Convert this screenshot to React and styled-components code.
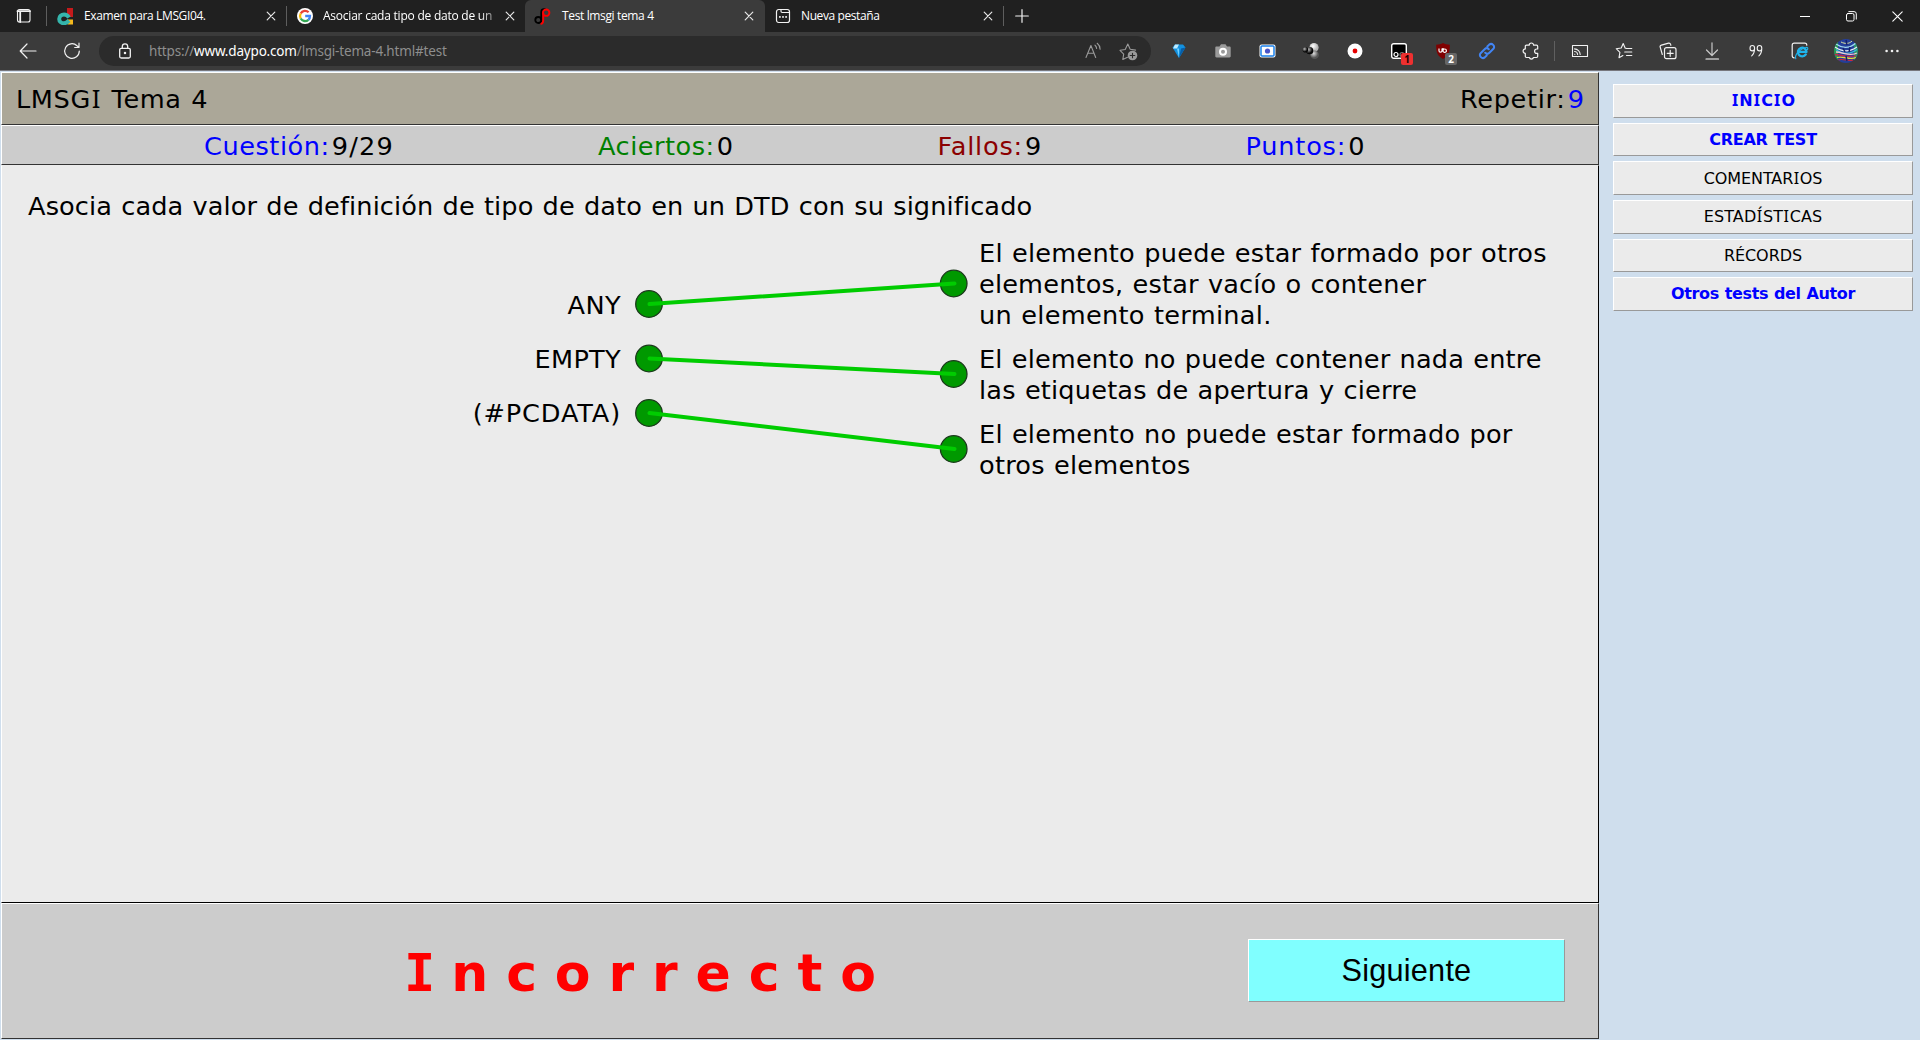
import React from "react";
import styled, { createGlobalStyle } from "styled-components";

const GlobalStyle = createGlobalStyle`
  * { box-sizing: border-box; }
  html, body { margin: 0; height: 1040px; overflow: hidden; }
  body { background: #cfdeed; color: #000; }
  svg { display: block; flex: none; }
`;

const VERDANA = `"DejaVu Sans", Verdana, sans-serif`;
const SEGOE = `"Open Sans", "Noto Sans", sans-serif`;

/* ---------- shared text ---------- */

const Text = styled.span`
  color: ${(p) => p.$color || "inherit"};
  letter-spacing: ${(p) => p.$track || 0}px;
  word-spacing: 0.034em;
  white-space: pre;
`;

const Serifed = styled.span`
  font-family: "Noto Sans", sans-serif;
  line-height: 1;
  margin: 0 ${(p) => p.$gap}em;
`;

/* Capital I carries slab serifs, the other letters do not. */
const slab = (text, gap = 0.035) =>
  text.split(/([IÍ])/).map((part, i) =>
    part === "I" || part === "Í" ? <Serifed key={i} $gap={gap}>{part}</Serifed> : part
  );

/* ---------- browser window ---------- */

const Window = styled.div`
  width: 1920px;
  height: 1040px;
  display: flex;
  flex-direction: column;
`;

const TabStrip = styled.div`
  height: 32px;
  display: flex;
  background: #202020;
  font: 12px/32px ${SEGOE};
  color: #fff;
`;

const TabActions = styled.div`
  width: 48px;
  padding: 0 0 0 16px;
  display: flex;
  align-items: center;
`;

const Divider = styled.span`
  width: 1px;
  height: 20px;
  margin: ${(p) => p.$margin || "0"};
  background: ${(p) => p.$color || "#5e5e5e"};
  align-self: center;
`;

const Tab = styled.div`
  width: ${(p) => p.$width}px;
  height: 32px;
  padding: 0 ${(p) => p.$end || 10}px 0 ${(p) => p.$pad}px;
  display: flex;
  align-items: center;
  border-radius: 6px 6px 0 0;
  background: ${(p) => (p.$active ? "#3b3b3b" : "transparent")};
`;

const TabTitle = styled.span`
  flex: 1;
  min-width: 0;
  margin-left: ${(p) => p.$gap}px;
  letter-spacing: ${(p) => p.$track}px;
  white-space: nowrap;
  ${(p) => p.$faded && "mask-image: linear-gradient(90deg, #000 86%, rgba(0, 0, 0, 0.35) 95%);"}
`;

const WindowControls = styled.div`
  margin-left: auto;
  display: flex;
`;

const ControlSlot = styled.div`
  width: ${(p) => p.$width || 46}px;
  display: flex;
  align-items: center;
  justify-content: center;
`;

const Toolbar = styled.div`
  height: 39px;
  display: flex;
  align-items: center;
  background: #3b3b3b;
  border-bottom: 1px solid #77777d;
`;

const NavSlot = styled.div`
  width: 44px;
  height: 38px;
  display: flex;
  align-items: center;
  justify-content: center;
  &:first-child { margin-left: 6px; }
`;

const AddressBar = styled.div`
  width: 1052px;
  height: 30px;
  margin-left: 5px;
  padding: 0 13px 0 18px;
  display: flex;
  align-items: center;
  border-radius: 15px;
  background: #2b2b2b;
  font: 13.5px/30px "Noto Sans", sans-serif;
  letter-spacing: -0.18px;
  color: #8e8e8e;
`;

const Url = styled.span`
  flex: 1;
  margin-left: 16px;
`;

const Host = styled.span`
  color: #fff;
`;

const AddressIcons = styled.div`
  display: flex;
  gap: 17px;
`;

const Extensions = styled.div`
  display: flex;
  align-items: center;
  margin-left: 6px;
`;

const ToolSlot = styled.div`
  position: relative;
  width: 44px;
  height: 38px;
  margin-left: ${(p) => p.$shift || 0}px;
  display: flex;
  align-items: center;
  justify-content: center;
`;

const Badge = styled.span`
  position: absolute;
  left: 24px;
  top: 21px;
  width: 12px;
  height: 12px;
  border-radius: 2px;
  background: ${(p) => p.$bg};
  color: ${(p) => p.$color};
  font: bold 10px/12px ${SEGOE};
  text-align: center;
`;

/* ---------- page ---------- */

const Page = styled.div`
  flex: 1;
  display: flex;
  padding: 1px 7px 0 1px;
  font: 25.6px/31px ${VERDANA};
`;

const Quiz = styled.main`
  width: 1598px;
  height: 967px;
  display: flex;
  flex-direction: column;
`;

const Panel = styled.section`
  border: 1px solid #333;
  border-top-color: #fff;
  border-left-color: #fff;
  background: #ccc;
`;

const TitleBar = styled(Panel)`
  height: 53px;
  padding: 2px 14px 0 14px;
  display: flex;
  align-items: center;
  justify-content: space-between;
  background: #aba798;
`;

const Pair = styled.div`
  display: flex;
  gap: 2px;
`;

const ScoreBar = styled(Panel)`
  height: 40px;
  padding: 3px 0 0 202px;
  display: grid;
  grid-template-columns: 394px 339.5px 308px 1fr;
  align-items: center;
`;

const Question = styled(Panel)`
  flex: 1;
  padding: 25px 26px 0 26px;
  border-color: #ebebeb #000 #000 #fff;
  background: #ebebeb;
  display: flex;
  flex-direction: column;
  gap: 17px;
`;

const Matching = styled.div`
  display: grid;
  grid-template-columns: 593px 358px 1fr;
  align-items: center;
`;

const Terms = styled.div`
  display: flex;
  flex-direction: column;
  align-items: flex-end;
  gap: 23px;
  margin: -1px 0 1px;
`;

const Meanings = styled.div`
  display: flex;
  flex-direction: column;
  gap: 13px;
  margin: -1px 0 1px;
`;

const Meaning = styled.div`
  display: flex;
  flex-direction: column;
`;

const Footer = styled(Panel)`
  height: 136px;
  padding: 0 33px 0 402px;
  display: flex;
  align-items: center;
  justify-content: space-between;
`;

const Verdict = styled.div`
  padding-top: 3px;
  font: bold 52px/62px ${VERDANA};
  letter-spacing: 17.9px;
  color: #f00;
`;

const VerdictInitial = styled.span`
  font-family: "DejaVu Sans Mono", monospace;
  margin-right: -2px;
`;

const NextButton = styled.button`
  width: 317px;
  height: 63px;
  margin-bottom: 1px;
  padding: 0;
  border: 1px solid #999;
  border-top-color: #fff;
  border-left-color: #fff;
  background: #80ffff;
  color: #000;
  font: 30.7px "Liberation Sans", Arial, sans-serif;
  letter-spacing: 0.2px;
`;

const Sidebar = styled.nav`
  width: 300px;
  margin-left: 14px;
  padding-top: 12.2px;
  display: flex;
  flex-direction: column;
  gap: 5px;
`;

const SideLink = styled.a`
  height: 33.6px;
  padding-top: 1px;
  display: flex;
  align-items: center;
  justify-content: center;
  border: 1px solid #999;
  border-top-color: #fff;
  border-left-color: #fff;
  background: #ebebeb;
  font-size: 16px;
  line-height: 20px;
  font-weight: ${(p) => (p.$strong ? "bold" : "normal")};
  color: ${(p) => (p.$strong ? "#00f" : "#000")};
`;

/* ---------- icons ---------- */

const Icon = ({ size = 18, color = "#f2f2f2", width = 1.1, box, children }) => (
  <svg width={size} height={size} viewBox={box || `0 0 ${size} ${size}`} fill="none"
    stroke={color} strokeWidth={width} strokeLinecap="round" strokeLinejoin="round">
    {children}
  </svg>
);

const TabsIcon = () => (
  <Icon size={16}>
    <rect x="1.5" y="1.5" width="12.5" height="12.5" rx="2" />
    <path d="M1.5 3.2h12.5M4.2 4v10" strokeWidth="1.8" />
  </Icon>
);
const CloseIcon = () => (
  <Icon size={10} width={1.2} color="#e8e8e8"><path d="M1.2 1.2l7.6 7.6M8.8 1.2L1.2 8.8" /></Icon>
);
const DaypoCampusIcon = () => (
  <svg width="17" height="17" viewBox="0 0 17 17">
    <path d="M10 0h6v9h-6z" fill="#c51a1b" />
    <path d="M10.500 11.500h5.500v5h-5.500z" fill="#f5b81c" />
    <path d="M12 9.500c-1.500-2.500-2.500-3-5-3s-4.800 2-4.800 4.500 2 4.300 4.800 4.300c2.300 0 3-.8 5-2.800" fill="none" stroke="#35b5ac" strokeWidth="4" />
  </svg>
);
const GoogleIcon = () => (
  <svg width="16" height="16" viewBox="0 0 16 16">
    <circle cx="8" cy="8" r="8" fill="#fff" />
    <g fill="none" strokeWidth="2.300">
      <path d="M11.600 4.300A5 5 0 0 0 3.700 5.500" stroke="#ea4335" />
      <path d="M3.700 5.500a5 5 0 0 0 0 5" stroke="#fbbc05" />
      <path d="M3.700 10.500a5 5 0 0 0 7.700 1.300" stroke="#34a853" />
      <path d="M11.400 11.800A5 5 0 0 0 13 8H8.200" stroke="#4285f4" />
    </g>
  </svg>
);
const DaypoIcon = () => (
  <svg width="17" height="17" viewBox="0 0 17 17" fill="none" strokeWidth="1.900" strokeLinecap="round">
    <path d="M11 1.200C8 .8 7.300 2 7.300 4v7.500" stroke="#000" />
    <circle cx="4.300" cy="12" r="3" stroke="#000" />
    <circle cx="12.200" cy="4.700" r="3.200" stroke="#f00" />
    <path d="M9.200 5v7.500c0 2-.8 3-2 3.300" stroke="#f00" />
  </svg>
);
const NewTabIcon = () => (
  <Icon size={16} width={1.2}>
    <rect x="1.500" y="1.500" width="13" height="13" rx="2.200" />
    <path d="M6 1.800v1.500c0 .8.4 1.200 1.200 1.200h7" />
    <path d="M4.800 8.900h.2M7.900 8.900h.2M11 8.900h.2" strokeWidth="1.800" />
  </Icon>
);
const PlusIcon = () => <Icon size={14} width={1.2}><path d="M7 .7v12.600M.7 7h12.600" /></Icon>;
const MinimizeIcon = () => <Icon size={10} color="#fff" width={1}><path d="M0 5.500h10" /></Icon>;
const RestoreIcon = () => (
  <Icon size={11} color="#fff" width={1}>
    <rect x=".5" y="2.500" width="7.500" height="7.500" rx="1.500" />
    <path d="M2.800.6h5.200a2.300 2.300 0 0 1 2.300 2.300v5.200" />
  </Icon>
);
const WinCloseIcon = () => <Icon size={11} color="#fff" width={1.100}><path d="M.8.8l9.400 9.400M10.200.8L.8 10.200" /></Icon>;
const BackIcon = () => <Icon size={18} width={1.200}><path d="M17 9H1.500M8 2L1.200 9 8 16" /></Icon>;
const ReloadIcon = () => (
  <Icon size={18} width={1.200}><path d="M16.300 9A7.300 7.300 0 1 1 14 3.700l1.800 1.600M16 1.200v4.300h-4.300" /></Icon>
);
const LockIcon = () => (
  <Icon size={16} width={1.300}>
    <rect x="2.700" y="5.300" width="10.600" height="9.700" rx="1.500" />
    <path d="M5.300 5V3.500a2.700 2.700 0 0 1 5.400 0V5" />
    <circle cx="8" cy="10.100" r=".6" fill="#f2f2f2" />
  </Icon>
);
const ReadAloudIcon = () => (
  <Icon size={18} color="#9a9a9a">
    <path d="M2 15.500L6.900 3.500l4.800 12M3.700 11.300h6.300M11 3.200c1 .8 1.500 1.800 1.600 3.200M13.200 1.300c1.800 1.400 2.800 3.300 2.900 6" />
  </Icon>
);
const AddFavoriteIcon = () => (
  <Icon size={19} color="#9a9a9a">
    <path d="M8.500 15.200l-4.700 2.300.9-5.300L1 8.300l5.200-.8L8.800 2l2.400 5.300 5.400.8" />
    <circle cx="13.500" cy="13.500" r="4.800" fill="#9a9a9a" stroke="none" />
    <path d="M13.500 11.200v4.600M11.200 13.500h4.600" stroke="#2b2b2b" />
  </Icon>
);
const DiamondIcon = () => (
  <svg width="14" height="16" viewBox="0 0 14 16">
    <path d="M3 1.500h8L13.500 4.500 7 15 .5 4.500z" fill="#1391e0" />
    <path d="M3 1.500h4L5 5.500H1z" fill="#bdebff" />
    <path d="M7 15V5.500H5z" fill="#6fd0ff" /><path d="M7 15l2-9.500L13.500 4.500z" fill="#075ea8" />
  </svg>
);
const CameraIcon = () => (
  <svg width="16" height="16" viewBox="0 0 16 16">
    <path d="M1.500 3.500h3l1.500-2.200h4.500L12 3.500h2.500c.7 0 1.200.5 1.200 1.200v8.600c0 .7-.5 1.200-1.200 1.200h-13c-.7 0-1.200-.5-1.200-1.200V4.700c0-.7.5-1.200 1.200-1.200z" fill="#9b9b9b" />
    <circle cx="8" cy="8.700" r="3" fill="none" stroke="#fff" strokeWidth="2" />
  </svg>
);
const WebcamIcon = () => (
  <svg width="17" height="14" viewBox="0 0 17 14">
    <rect x=".5" y=".5" width="16" height="13" rx="2" fill="#fff" />
    <rect x="2" y="2" width="13" height="10" rx="1" fill="#fff" stroke="#1a80ea" strokeWidth="1.500" />
    <circle cx="8.500" cy="7" r="2.600" fill="#4a55c8" />
  </svg>
);
const SpheresIcon = () => (
  <svg width="18" height="18" viewBox="0 0 18 18">
    <defs>
      <radialGradient id="dark" cx=".35" cy=".35"><stop offset="0" stopColor="#bbb" /><stop offset="1" stopColor="#080808" /></radialGradient>
      <radialGradient id="lite" cx=".4" cy=".35"><stop offset="0" stopColor="#fff" /><stop offset="1" stopColor="#b5b5b5" /></radialGradient>
      <radialGradient id="mid" cx=".4" cy=".35"><stop offset="0" stopColor="#ddd" /><stop offset="1" stopColor="#555" /></radialGradient>
    </defs>
    <circle cx="12" cy="5.500" r="4.600" fill="url(#lite)" />
    <circle cx="12.600" cy="12.800" r="4.300" fill="url(#mid)" />
    <circle cx="7.700" cy="8.700" r="3.600" fill="url(#dark)" /><circle cx="3.400" cy="7.800" r="2.800" fill="url(#dark)" />
  </svg>
);
const RecordIcon = () => (
  <svg width="16" height="16" viewBox="0 0 16 16"><circle cx="8" cy="8" r="7.500" fill="#fff" /><circle cx="8" cy="8" r="2.400" fill="#e60000" /></svg>
);
const ScriptIcon = () => (
  <svg width="16" height="16" viewBox="0 0 16 16">
    <rect x=".7" y=".7" width="14.600" height="14.600" rx="2" fill="#000" stroke="#fff" strokeWidth="1.400" />
    <circle cx="5" cy="11.500" r="2" fill="none" stroke="#fff" strokeWidth="1.200" />
    <circle cx="11" cy="11.500" r="2" fill="none" stroke="#777" strokeWidth="1.200" />
  </svg>
);
const ShieldIcon = () => (
  <svg width="16" height="18" viewBox="0 0 16 18">
    <path d="M8 1c2 1.200 4 1.700 6.800 1.700C15 10 13.500 14 8 17 2.500 14 1 10 1.200 2.700 4 2.700 6 2.200 8 1z" fill="#800000" />
    <path d="M4 6.500v2.200c0 2 3 2 3 0V6.500M8 8.700a1.700 1.700 0 1 0 3.400 0 1.700 1.700 0 1 0-3.400 0V6" fill="none" stroke="#fff" strokeWidth="1.200" />
  </svg>
);
const LinkIcon = () => (
  <Icon size={18} color="#4285f4" width={2}>
    <path d="M7.200 10.800a3 3 0 0 0 4.200 0l4-4a3 3 0 0 0-4.200-4.200L9.300 4.500M10.800 7.200a3 3 0 0 0-4.200 0l-4 4a3 3 0 0 0 4.200 4.200l1.900-1.900" />
  </Icon>
);
const PuzzleIcon = () => (
  <Icon size={18} width={1.200}>
    <path d="M4.500 3.200h2.700a2.200 2.200 0 0 1 4.400 0h2.900c.8 0 1.200.4 1.200 1.200v2.600h-.9a2.200 2.200 0 0 0 0 4.400h.9v2.900c0 .8-.4 1.200-1.200 1.200h-3a2.200 2.200 0 0 1-4.200 0H4.500c-.8 0-1.200-.4-1.200-1.200v-3a2.200 2.200 0 0 1 0-4.400V4.400c0-.8.4-1.200 1.200-1.200z" />
  </Icon>
);
const CastIcon = () => (
  <Icon size={18} width={1.100}>
    <path d="M1.500 14.500V3.500h15v11zM3.700 12.300h.2M3.600 9.500a3 3 0 0 1 3 3M3.600 6.900a5.800 5.800 0 0 1 5.600 5.600" />
  </Icon>
);
const FavoritesIcon = () => (
  <Icon size={18} width={1.100}>
    <path d="M11 6.300h-.8L8.200 1.500 6.200 6l-5 .7 3.700 3.600-.9 5.400 3.900-2.200M11.500 6.500h5.300M9.700 10h7.100M11.500 13.500h5.300" />
  </Icon>
);
const CollectionsIcon = () => (
  <Icon size={18} width={1.200}>
    <rect x="5.500" y="5.700" width="11.500" height="11" rx="2" />
    <path d="M11.200 8.300v6M8.200 11.300h6M3.300 12.500L1.200 5.200c-.3-1 .2-1.800 1.200-2.100L9.600 1.200c1-.2 1.700.2 2 1.200l.3.900" />
  </Icon>
);
const DownloadIcon = () => (
  <Icon size={18} width={1.200} color="#c8c8c8"><path d="M9 .8v12.500M3.500 8L9 13.500 14.500 8" /><path d="M3 17h12.500" stroke="#fff" /></Icon>
);
const QuoteIcon = () => (
  <Icon size={16} width={1.100}>
    <path d="M6.600 5.200a2.300 2.700 0 1 1-4.600 0 2.300 2.700 0 0 1 4.600 0c0 3-.8 5.700-2.900 7.600M13.800 5.200a2.300 2.700 0 1 1-4.600 0 2.300 2.700 0 0 1 4.600 0c0 3-.8 5.700-2.900 7.600" />
  </Icon>
);
const IEModeIcon = () => (
  <Icon size={18} width={1.200}>
    <path d="M3.200 15.800c-1.300 0-2-.7-2-2V3.200c0-1.300.7-2 2-2h10.600c1.300 0 2 .7 2 2" />
    <path d="M14.800 12.400a4.300 4.300 0 1 1 .7-2.600H7.500" stroke="#1fb4ec" strokeWidth="2.300" />
    <path d="M4.800 16.800c-1.300-3 2.500-9.500 11-11.500 1.400.2 1 1.500.7 2.300" stroke="#1fb4ec" strokeWidth="1.100" />
  </Icon>
);
const MoreIcon = () => (
  <svg width="16" height="4" viewBox="0 0 16 4" fill="#f2f2f2"><circle cx="2.600" cy="2" r="1.300" /><circle cx="8" cy="2" r="1.300" /><circle cx="13.400" cy="2" r="1.300" /></svg>
);
const AvatarIcon = () => (
  <svg width="24" height="24" viewBox="0 0 24 24">
    <defs><clipPath id="face"><circle cx="12" cy="12" r="12" /></clipPath></defs>
    <g clipPath="url(#face)" fill="none">
      <path d="M0 0h24v24H0z" fill="#243f9a" />
      <path d="M0 4v18l4 2V2z" fill="#2a9a50" /><path d="M20 4l4 0v14l-4 4z" fill="#2b9468" />
      <path d="M2 5c7 5 14 4 20-1" stroke="#9fd7ee" strokeWidth="1.400" />
      <path d="M7 3c4 2 8 2 11-1" stroke="#dfe6a0" strokeWidth="1" />
      <path d="M1 8c7 5 15 5 22 0" stroke="#e6edf5" strokeWidth="1.300" />
      <path d="M2 10.500c6 5 14 5 21 0" stroke="#35b8dc" strokeWidth="1.200" />
      <path d="M2 13c7 0 14 5 21 1" stroke="#f0c8ce" strokeWidth="1.300" />
      <path d="M1 15.500c7 0 14 4 21 1" stroke="#c22650" strokeWidth="1.300" />
      <path d="M3 18.500c6-2 13 3 19 0" stroke="#e8d83c" strokeWidth="1.300" />
      <path d="M4 21c6-2 10 2 15 0" stroke="#d02838" strokeWidth="1.200" />
      <path d="M12 1l1 5M9 9l2 4M16 8l-1 5M12 17l1 5" stroke="#15206a" strokeWidth="1.400" />
    </g>
  </svg>
);

/* ---------- data ---------- */

const tabs = [
  { title: "Examen para LMSGI04.", icon: <DaypoCampusIcon />, width: 238, pad: 9, gap: 10, track: -0.38, divider: true },
  { title: "Asociar cada tipo de dato de un", icon: <GoogleIcon />, width: 238, pad: 10, gap: 10, track: -0.23, faded: true },
  { title: "Test lmsgi tema 4", icon: <DaypoIcon />, width: 240, pad: 9, end: 11, gap: 11, track: -0.36, active: true },
  { title: "Nueva pestaña", icon: <NewTabIcon />, width: 238, pad: 10, gap: 10, track: -0.4, divider: true },
];

const extensions = [
  { icon: <DiamondIcon /> },
  { icon: <CameraIcon /> },
  { icon: <WebcamIcon /> },
  { icon: <SpheresIcon /> },
  { icon: <RecordIcon /> },
  { icon: <ScriptIcon />, badge: { text: "1", bg: "#ee3030", color: "#200" } },
  { icon: <ShieldIcon />, badge: { text: "2", bg: "#666", color: "#fff" } },
  { icon: <LinkIcon /> },
  { icon: <PuzzleIcon /> },
];

const tools = [
  { icon: <CastIcon />, shift: 3 },
  { icon: <FavoritesIcon /> },
  { icon: <CollectionsIcon /> },
  { icon: <DownloadIcon /> },
  { icon: <QuoteIcon /> },
  { icon: <IEModeIcon /> },
  { icon: <AvatarIcon />, shift: 2 },
  { icon: <MoreIcon />, shift: 2 },
];

const scores = [
  { label: "Cuestión:", value: "9/29", color: "#00f", track: 0.55, valueTrack: 1.2 },
  { label: "Aciertos:", value: "0", color: "#008000", track: 0.5 },
  { label: "Fallos:", value: "9", color: "#8b0000", track: 0.8 },
  { label: "Puntos:", value: "0", color: "#00f", track: 0.8 },
];

const terms = [
  { text: "ANY", track: 0.4 },
  { text: "EMPTY", track: 0.3 },
  { text: "(#PCDATA)", track: 0.85 },
];

const meanings = [
  [["El elemento puede estar formado por otros", 0.23], ["elementos, estar vacío o contener", 0.17], ["un elemento terminal.", 0.28]],
  [["El elemento no puede contener nada entre", 0.16], ["las etiquetas de apertura y cierre", 0.19]],
  [["El elemento no puede estar formado por", 0.21], ["otros elementos", 0.22]],
];

const links = [
  { from: 65, to: 44.500 },
  { from: 119.500, to: 135 },
  { from: 174, to: 210 },
];

const menu = [
  { text: "INICIO", strong: true, track: 0.1, gap: 0.065 },
  { text: "CREAR TEST", strong: true, track: -0.25 },
  { text: "COMENTARIOS", track: -0.1 },
  { text: "ESTADÍSTICAS", track: 0.1 },
  { text: "RÉCORDS", track: -0.05 },
  { text: "Otros tests del Autor", strong: true, track: -0.35 },
];

const Connections = () => (
  <svg width="358" height="243" viewBox="1 0 358 243">
    {links.map(({ from, to }) => (
      <g key={from}>
        <circle cx="29" cy={from} r="13.300" fill="#090" stroke="#1c3a1c" strokeWidth="1.300" />
        <circle cx="333.700" cy={to} r="13.300" fill="#090" stroke="#1c3a1c" strokeWidth="1.300" />
        <path d={`M29.500 ${from}L334.500 ${to}`} stroke="#0c0" strokeWidth="4" strokeLinecap="round" />
      </g>
    ))}
  </svg>
);

export default function App() {
  return (
    <Window>
      <GlobalStyle />
      <TabStrip>
        <TabActions><TabsIcon /><Divider $margin="0 0 0 14px" /></TabActions>
        {tabs.map((t) => (
          <React.Fragment key={t.title}>
            <Tab $width={t.width} $pad={t.pad} $end={t.end} $active={t.active}>
              {t.icon}
              <TabTitle $gap={t.gap} $track={t.track} $faded={t.faded}>{t.title}</TabTitle>
              <CloseIcon />
            </Tab>
            {t.divider && <Divider />}
          </React.Fragment>
        ))}
        <ControlSlot $width={36}><PlusIcon /></ControlSlot>
        <WindowControls>
          <ControlSlot><MinimizeIcon /></ControlSlot>
          <ControlSlot><RestoreIcon /></ControlSlot>
          <ControlSlot><WinCloseIcon /></ControlSlot>
        </WindowControls>
      </TabStrip>
      <Toolbar>
        <NavSlot><BackIcon /></NavSlot>
        <NavSlot><ReloadIcon /></NavSlot>
        <AddressBar>
          <LockIcon />
          <Url>https://<Host>www.daypo.com</Host>/lmsgi-tema-4.html#test</Url>
          <AddressIcons><ReadAloudIcon /><AddFavoriteIcon /></AddressIcons>
        </AddressBar>
        <Extensions>
          {extensions.map((e, i) => (
            <ToolSlot key={i}>
              {e.icon}
              {e.badge && <Badge $bg={e.badge.bg} $color={e.badge.color}>{e.badge.text}</Badge>}
            </ToolSlot>
          ))}
          <Divider $margin="0 0 0 1px" $color="#606060" />
          {tools.map((t, i) => <ToolSlot key={i} $shift={t.shift}>{t.icon}</ToolSlot>)}
        </Extensions>
      </Toolbar>
      <Page>
        <Quiz>
          <TitleBar>
            <Text $track={0.6}>{slab("LMSGI Tema 4")}</Text>
            <Pair><Text $track={0.7}>Repetir:</Text><Text $color="#00f">9</Text></Pair>
          </TitleBar>
          <ScoreBar>
            {scores.map((s) => (
              <Pair key={s.label}>
                <Text $color={s.color} $track={s.track}>{s.label}</Text>
                <Text $track={s.valueTrack}>{s.value}</Text>
              </Pair>
            ))}
          </ScoreBar>
          <Question>
            <Text $track={0.12}>Asocia cada valor de definición de tipo de dato en un DTD con su significado</Text>
            <Matching>
              <Terms>{terms.map((t) => <Text key={t.text} $track={t.track}>{t.text}</Text>)}</Terms>
              <Connections />
              <Meanings>
                {meanings.map((lines, i) => (
                  <Meaning key={i}>
                    {lines.map(([line, track]) => <Text key={line} $track={track}>{line}</Text>)}
                  </Meaning>
                ))}
              </Meanings>
            </Matching>
          </Question>
          <Footer>
            <Verdict><VerdictInitial>I</VerdictInitial>ncorrecto</Verdict>
            <NextButton>Siguiente</NextButton>
          </Footer>
        </Quiz>
        <Sidebar>
          {menu.map((m) => (
            <SideLink key={m.text} $strong={m.strong}><Text $track={m.track}>{slab(m.text, m.gap)}</Text></SideLink>
          ))}
        </Sidebar>
      </Page>
    </Window>
  );
}
